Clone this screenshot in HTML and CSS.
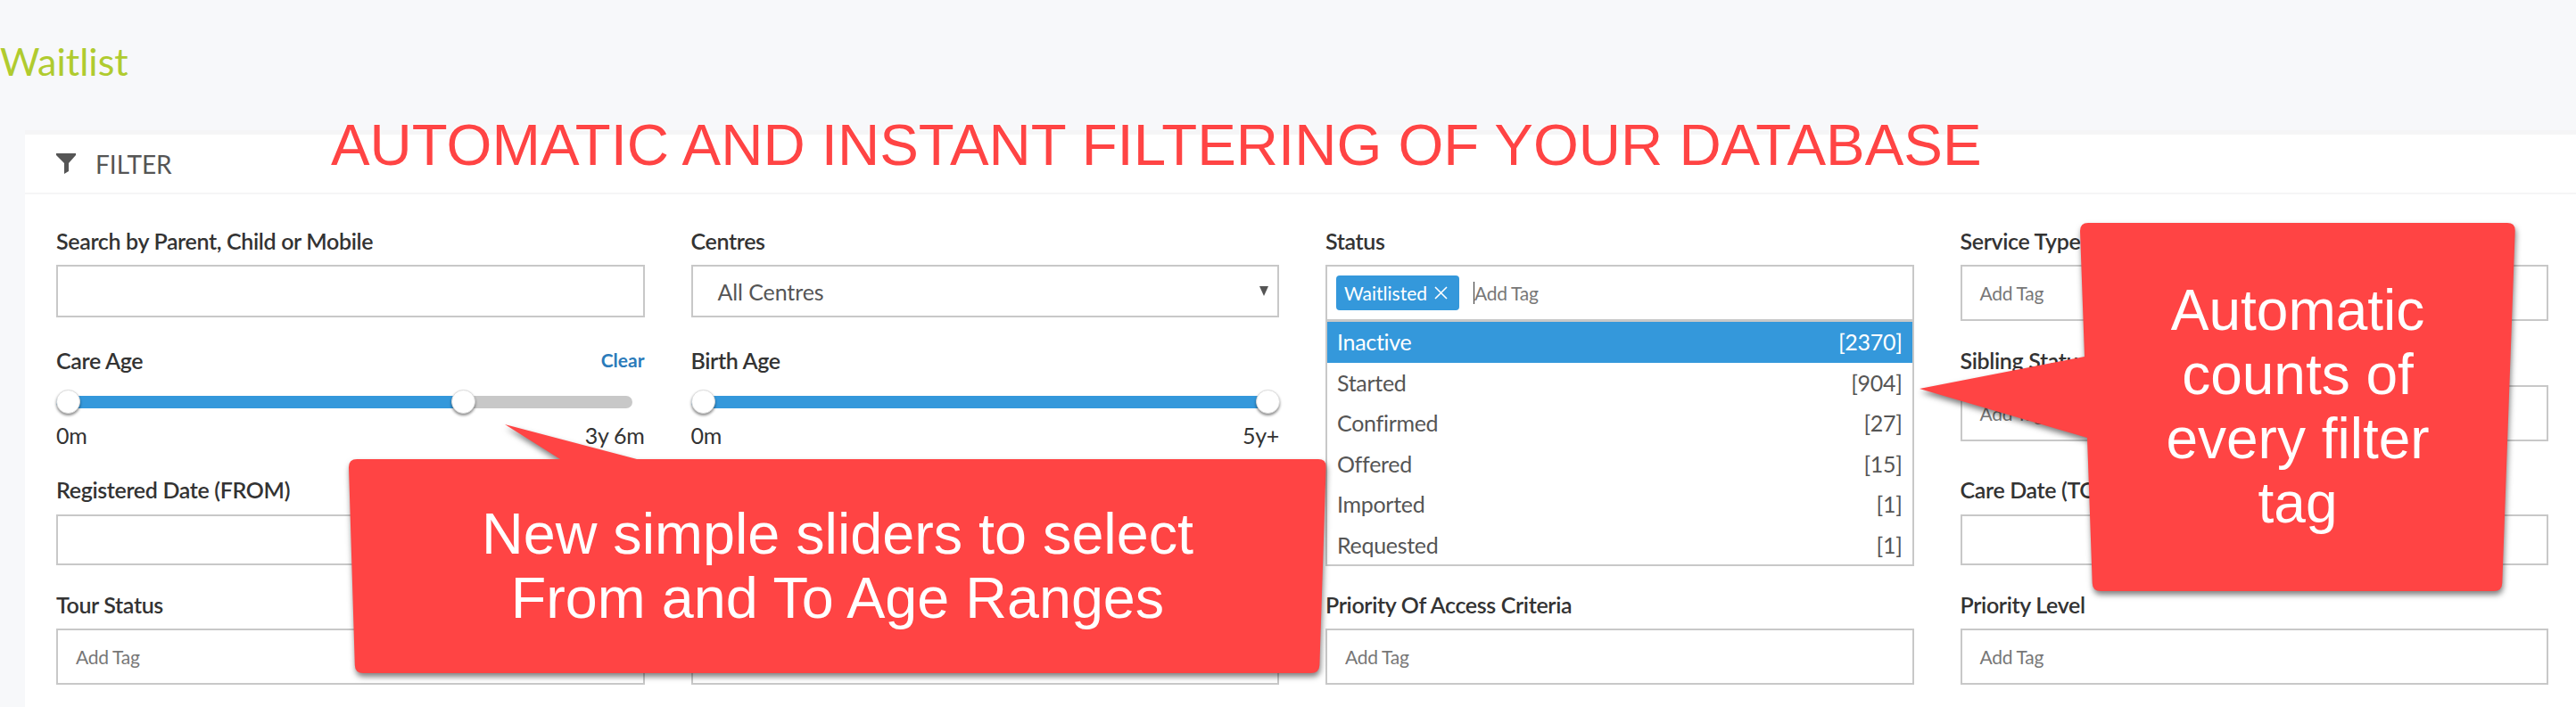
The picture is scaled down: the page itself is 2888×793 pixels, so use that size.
FILE: index.html
```html
<!DOCTYPE html>
<html lang="en">
<head>
<meta charset="utf-8">
<title>Waitlist</title>
<link rel="stylesheet" href="styles.css">
</head>
<body>
<main class="page">
  <h1 class="title">Waitlist</h1>
  <section class="panel">
    <header class="panel-head">
      <svg class="funnel" viewBox="0 0 22 23" aria-hidden="true"><path d="M0 0H22V2L14 11V20L9 23V11L0 2Z"/></svg>
      <span>FILTER</span>
    </header>
    <div class="filters">
      <div class="field c1 r1">
        <div class="label">Search by Parent, Child or Mobile</div>
        <div class="box"></div>
      </div>
      <div class="field c2 r1">
        <div class="label">Centres</div>
        <div class="box select"><span>All Centres</span><i class="arrow"></i></div>
      </div>
      <div class="field status">
        <div class="label">Status</div>
        <div class="status-box">
          <div class="tag-row">
            <span class="tag">Waitlisted <svg class="tag-x" viewBox="0 0 15 15" aria-hidden="true"><path d="M1 1L14 14M14 1L1 14"/></svg></span>
            <span class="caret"></span><span class="placeholder">Add Tag</span>
          </div>
          <ul class="options">
            <li class="on"><span>Inactive</span><span>[2370]</span></li>
            <li><span>Started</span><span>[904]</span></li>
            <li><span>Confirmed</span><span>[27]</span></li>
            <li><span>Offered</span><span>[15]</span></li>
            <li><span>Imported</span><span>[1]</span></li>
            <li><span>Requested</span><span>[1]</span></li>
          </ul>
        </div>
      </div>
      <div class="field c4 r1">
        <div class="label">Service Type</div>
        <div class="box tags tall"><span class="placeholder">Add Tag</span></div>
      </div>

      <div class="field c1 r2">
        <div class="label split"><span>Care Age</span><a class="clear">Clear</a></div>
        <div class="slider">
          <div class="track"><div class="fill" style="width:70.7%"></div></div>
          <i class="knob" style="left:0"></i><i class="knob" style="left:67.2%"></i>
        </div>
        <div class="scale"><span>0m</span><span>3y 6m</span></div>
      </div>
      <div class="field c2 r2">
        <div class="label split"><span>Birth Age</span></div>
        <div class="slider">
          <div class="track"><div class="fill" style="width:100%"></div></div>
          <i class="knob" style="left:0"></i><i class="knob" style="left:96.1%"></i>
        </div>
        <div class="scale"><span>0m</span><span>5y+</span></div>
      </div>
      <div class="field c4 r2">
        <div class="label">Sibling Status</div>
        <div class="box tags tall"><span class="placeholder">Add Tag</span></div>
      </div>

      <div class="field c1 r3">
        <div class="label">Registered Date (FROM)</div>
        <div class="box"></div>
      </div>
      <div class="field c2 r3">
        <div class="label"></div>
        <div class="box"></div>
      </div>
      <div class="field c4 r3">
        <div class="label">Care Date (TO)</div>
        <div class="box"></div>
      </div>

      <div class="field c1 r4">
        <div class="label">Tour Status</div>
        <div class="box tags tall"><span class="placeholder">Add Tag</span></div>
      </div>
      <div class="field c2 r4">
        <div class="label"></div>
        <div class="box tags tall"></div>
      </div>
      <div class="field c3 r4">
        <div class="label">Priority Of Access Criteria</div>
        <div class="box tags tall"><span class="placeholder">Add Tag</span></div>
      </div>
      <div class="field c4 r4">
        <div class="label">Priority Level</div>
        <div class="box tags tall"><span class="placeholder">Add Tag</span></div>
      </div>
    </div>
  </section>
</main>

<div class="headline">AUTOMATIC AND INSTANT FILTERING OF YOUR DATABASE</div>

<aside class="callout callout-sliders">
  <svg class="callout-shape" viewBox="0 0 1096 279" aria-hidden="true"><path d="M9 39H237L175 0L323 39H1087Q1096 39 1095.6 48L1088.4 270Q1088 279 1079 279H16Q7 279 6.8 270L0 48Q0 39 9 39Z"/></svg>
  <p class="callout-text">New simple sliders to select<br>From and To Age Ranges</p>
</aside>

<aside class="callout callout-counts">
  <svg class="callout-shape" viewBox="0 0 668 413" aria-hidden="true"><path d="M189 0H659Q668 0 667.7 9L653.3 404Q653 413 644 413H203Q194 413 193.7 404L188 241L0 186L185 150L180 9Q180 0 189 0Z"/></svg>
  <p class="callout-text">Automatic<br>counts of<br>every filter<br>tag</p>
</aside>
</body>
</html>
```
FILE: styles.css
```css
* { box-sizing: border-box; }
html, body { margin: 0; height: 100%; }
body {
  width: 2888px;
  height: 793px;
  overflow: hidden;
  position: relative;
  background: #f7f8fa;
  font-family: Lato, "Liberation Sans", sans-serif;
  color: #333;
}
.page { padding-top: 44px; }
.title {
  margin: 0 0 52px;
  font-size: 43px;
  line-height: 50px;
  font-weight: 400;
  color: #b0cb2f;
}
.panel {
  margin-left: 28px;
  height: 647px;
  background: #fff;
  border-top: 5px solid #f5f5f6;
}
.panel-head {
  display: flex;
  align-items: center;
  gap: 22px;
  height: 67px;
  padding: 0 0 0 35px;
  border-bottom: 2px solid #f5f5f6;
  font-size: 28px;
  font-weight: 400;
  color: #555;
}
.funnel { width: 22px; height: 23px; fill: #555; }
.filters {
  display: grid;
  grid-template-columns: repeat(4, 659.5px);
  grid-template-rows: 134px 145px 129px auto;
  column-gap: 52px;
  padding: 37px 0 0 35px;
}
.c1 { grid-column: 1; }
.c2 { grid-column: 2; }
.c3 { grid-column: 3; }
.c4 { grid-column: 4; }
.r1 { grid-row: 1; }
.r2 { grid-row: 2; }
.r3 { grid-row: 3; }
.r4 { grid-row: 4; }
.status { grid-column: 3; grid-row: 1 / span 3; }
.label {
  height: 30px;
  margin-bottom: 12px;
  font-size: 25px;
  line-height: 30px;
  letter-spacing: -.35px;
  font-weight: 600;
  color: #333;
  white-space: nowrap;
}
.r2 .label, .r3 .label { margin-bottom: 13px; }
.r2 .label.split { display: flex; justify-content: space-between; margin-bottom: 18px; }
.clear { font-size: 21px; font-weight: 700; letter-spacing: 0; color: #2b7bba; }
.box {
  height: 59px;
  border: 2px solid #c8c8c8;
  background: #fff;
}
.tall { height: 63px; }
.r3 .box { height: 57px; }
.tags { display: flex; align-items: center; padding-left: 20px; }
.placeholder { font-size: 21px; letter-spacing: -.3px; color: #777; }
.select {
  display: flex;
  align-items: center;
  justify-content: space-between;
  padding: 0 10px 0 28px;
  font-size: 25px;
  letter-spacing: -.1px;
  color: #555;
}
.arrow {
  width: 0;
  height: 0;
  border-left: 5px solid transparent;
  border-right: 5px solid transparent;
  border-top: 11px solid #555;
}
.status-box {
  height: 338px;
  border: 2px solid #c8c8c8;
  background: #fff;
}
.tag-row {
  display: flex;
  align-items: center;
  height: 62px;
  padding-left: 10px;
  border-bottom: 3px solid #c8c8c8;
}
.tag {
  display: inline-flex;
  align-items: center;
  gap: 8px;
  height: 39px;
  padding: 0 13px 0 9px;
  margin-right: 16px;
  border-radius: 4px;
  background: #3498db;
  color: #fff;
  font-size: 21px;
}
.tag-x { width: 15px; height: 15px; fill: none; stroke: #fff; stroke-width: 1.6; }
.caret { width: 1px; height: 25px; background: #333; }
.options { margin: 0; padding: 0; list-style: none; }
.options li {
  display: flex;
  justify-content: space-between;
  height: 45.6px;
  padding: 0 11px;
  font-size: 25px;
  letter-spacing: -.3px;
  line-height: 45px;
  color: #555;
}
.options .on { background: #3498db; color: #fff; }
.slider { position: relative; height: 27px; margin-bottom: 9px; padding-top: 7px; }
.track { width: 646px; height: 14px; border-radius: 7px; background: #c8c8c8; overflow: hidden; }
.fill { height: 100%; background: #3498db; }
.knob {
  position: absolute;
  top: 0;
  width: 27px;
  height: 27px;
  border-radius: 50%;
  background: #fff;
  border: 1px solid #ddd;
  box-shadow: 0 2px 3px rgba(0, 0, 0, .45);
}
.scale {
  display: flex;
  justify-content: space-between;
  font-size: 25px;
  letter-spacing: -.3px;
  line-height: 30px;
  color: #333;
}
.headline {
  position: absolute;
  left: 371px;
  top: 127px;
  font-family: "Liberation Sans", Arial, sans-serif;
  font-size: 65.4px;
  line-height: 72px;
  white-space: nowrap;
  color: #ff4444;
  text-shadow: 0 0 3px #fff, 0 0 3px #fff, 0 0 2px #fff;
}
.callout { position: absolute; margin: 0; }
.callout-shape {
  position: absolute;
  inset: 0;
  width: 100%;
  height: 100%;
  overflow: visible;
  fill: #ff4444;
  filter: drop-shadow(1px 4px 3px rgba(0, 0, 0, .5));
}
.callout-text {
  position: relative;
  margin: 0;
  font-family: "Liberation Sans", Arial, sans-serif;
  font-size: 64px;
  line-height: 72px;
  color: #fff;
  text-align: center;
}
.callout-sliders { left: 391px; top: 476px; width: 1096px; height: 279px; padding-top: 87px; }
.callout-sliders .callout-text { font-size: 64.7px; }
.callout-counts { left: 2152px; top: 250px; width: 668px; height: 413px; padding: 62px 0 0 180px; }
```
